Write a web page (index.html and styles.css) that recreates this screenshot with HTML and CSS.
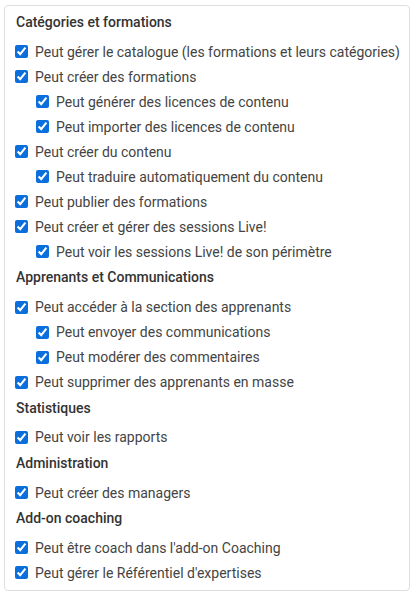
FILE: index.html
```html
<!DOCTYPE html>
<html lang="fr">
<head>
<meta charset="utf-8">
<link rel="stylesheet" href="styles.css">
</head>
<body>
<div class="card">
  <div class="section">
    <div class="heading">Catégories et formations</div>
    <label class="row"><input type="checkbox" checked><span>Peut gérer le catalogue (les formations et leurs catégories)</span></label>
    <label class="row"><input type="checkbox" checked><span>Peut créer des formations</span></label>
    <label class="row sub"><input type="checkbox" checked><span>Peut générer des licences de contenu</span></label>
    <label class="row sub"><input type="checkbox" checked><span>Peut importer des licences de contenu</span></label>
    <label class="row"><input type="checkbox" checked><span>Peut créer du contenu</span></label>
    <label class="row sub"><input type="checkbox" checked><span>Peut traduire automatiquement du contenu</span></label>
    <label class="row"><input type="checkbox" checked><span>Peut publier des formations</span></label>
    <label class="row"><input type="checkbox" checked><span>Peut créer et gérer des sessions Live!</span></label>
    <label class="row sub"><input type="checkbox" checked><span>Peut voir les sessions Live! de son périmètre</span></label>
  </div>
  <div class="section">
    <div class="heading">Apprenants et Communications</div>
    <label class="row"><input type="checkbox" checked><span>Peut accéder à la section des apprenants</span></label>
    <label class="row sub"><input type="checkbox" checked><span>Peut envoyer des communications</span></label>
    <label class="row sub"><input type="checkbox" checked><span>Peut modérer des commentaires</span></label>
    <label class="row"><input type="checkbox" checked><span>Peut supprimer des apprenants en masse</span></label>
  </div>
  <div class="section">
    <div class="heading">Statistiques</div>
    <label class="row"><input type="checkbox" checked><span>Peut voir les rapports</span></label>
  </div>
  <div class="section">
    <div class="heading">Administration</div>
    <label class="row"><input type="checkbox" checked><span>Peut créer des managers</span></label>
  </div>
  <div class="section">
    <div class="heading">Add-on coaching</div>
    <label class="row"><input type="checkbox" checked><span>Peut être coach dans l'add-on Coaching</span></label>
    <label class="row"><input type="checkbox" checked><span>Peut gérer le Référentiel d'expertises</span></label>
  </div>
</div>
</body>
</html>
```
FILE: styles.css
```css
html, body {
  margin: 0;
  padding: 0;
  background: #fff;
}
body {
  padding: 5px 0 0 4px;
  font-family: Roboto, "Liberation Sans", sans-serif;
  font-size: 14px;
  color: #444;
}
.card {
  width: 406px;
  box-sizing: border-box;
  border: 1px solid #dedede;
  border-radius: 4px;
  padding: 3px 4px 5px 10px;
}
.section {
  display: flex;
  flex-direction: column;
}
.heading {
  font-weight: 500;
  color: #333;
  line-height: 20px;
  padding: 3px 0 7.25px 1px;
}
.row {
  display: flex;
  align-items: center;
  height: 25px;
  gap: 7px;
  line-height: 20px;
  white-space: nowrap;
}
.row.sub {
  padding-left: 21px;
}
.row input {
  margin: 0;
  width: 13px;
  height: 13px;
  flex: none;
  accent-color: #0a6fdc;
}
```
